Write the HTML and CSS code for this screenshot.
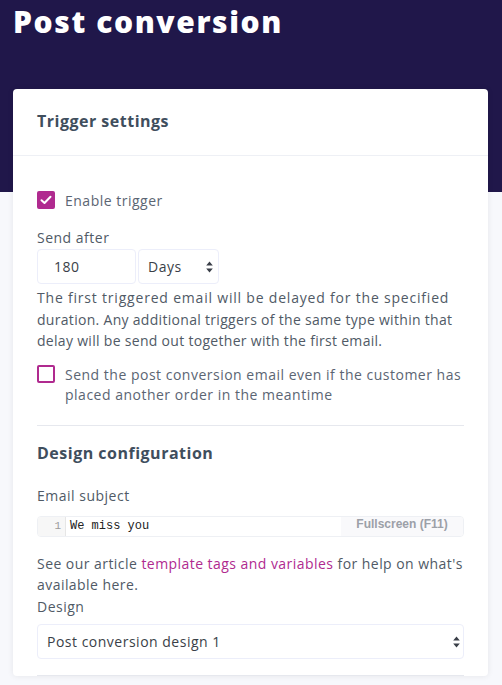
FILE: index.html
```html
<!DOCTYPE html>
<html>
<head>
<meta charset="utf-8">
<link rel="stylesheet" href="styles.css">
</head>
<body>
<div class="hero">
  <h1 class="page-title">Post conversion</h1>
</div>
<div class="main">
  <div class="card">
    <div class="card-header">Trigger settings</div>
    <div class="card-body">
      <label class="check-row">
        <span class="box checked"><svg width="12" height="10" viewBox="0 0 12 10"><path d="M1.5 5.2 L4.5 8 L10.5 1.8" fill="none" stroke="#fff" stroke-width="2" stroke-linecap="round" stroke-linejoin="round"/></svg></span>
        <span class="check-text">Enable trigger</span>
      </label>
      <div class="label send-label">Send after</div>
      <div class="send-row">
        <div class="input num">180</div>
        <div class="input sel days">Days<span class="arrows"><svg width="7" height="12" viewBox="0 0 7 12"><path d="M3.5 0.5 L6.8 4.6 H0.2 Z M3.5 11.5 L6.8 7.4 H0.2 Z" fill="#3a3f48"/></svg></span></div>
      </div>
      <p class="help"><span class="ln wide">The first triggered email will be delayed for the specified</span><br><span class="ln">duration. Any additional triggers of the same type within that</span><br><span class="ln">delay will be send out together with the first email.</span></p>
      <label class="check-row two">
        <span class="box"></span>
        <span class="check-text">Send the post conversion email even if the customer has placed another order in the meantime</span>
      </label>
      <hr class="divider">
      <h2 class="section-title">Design configuration</h2>
      <div class="label subj-label">Email subject</div>
      <div class="editor">
        <div class="gutter">1</div>
        <div class="code">We miss you</div>
        <div class="fullscreen">Fullscreen (F11)</div>
      </div>
      <p class="help article"><span class="ln">See our article <a class="link">template tags and variables</a> for help on what's</span><br><span class="ln">available here.</span></p>
      <div class="label design-label">Design</div>
      <div class="input sel design">Post conversion design 1<span class="arrows"><svg width="7" height="12" viewBox="0 0 7 12"><path d="M3.5 0.5 L6.8 4.6 H0.2 Z M3.5 11.5 L6.8 7.4 H0.2 Z" fill="#3a3f48"/></svg></span></div>
      <hr class="divider last">
    </div>
  </div>
</div>
</body>
</html>
```
FILE: styles.css
```css
* { box-sizing: border-box; }
html, body { margin: 0; padding: 0; }
body {
  background: #f7f8fc;
  font-family: "Open Sans", "DejaVu Sans", sans-serif;
  color: #505a66;
  letter-spacing: 0.5px;
  overflow: hidden;
  height: 685px;
}
.hero {
  background: #20174a;
  height: 192px;
  padding: 4px 13px 0;
}
.page-title {
  margin: 0;
  color: #fff;
  font-size: 30px;
  font-weight: 800;
  letter-spacing: 1.6px;
  line-height: 36px;
}
.main {
  margin-top: -103px;
  padding: 0 14px 0 13px;
}
.card {
  background: #fff;
  border-radius: 4px;
  box-shadow: 0 0 6px rgba(0,0,0,0.08);
}
.card-header {
  height: 67px;
  padding: 21px 24px 0;
  font-size: 16px;
  font-weight: 700;
  color: #3f4e5d;
  border-bottom: 1px solid #eef0f5;
}
.card-body {
  padding: 35px 24px 0;
}
.check-row {
  display: flex;
  align-items: flex-start;
  gap: 10px;
  font-size: 14px;
  line-height: 20px;
}
.box {
  flex: none;
  width: 18px;
  height: 18px;
  border: 2px solid #b02a8f;
  border-radius: 2px;
  display: flex;
  align-items: center;
  justify-content: center;
}
.box.checked { background: #b02a8f; }
.check-text { color: #5b6573; }
.label {
  font-size: 14px;
  line-height: 20px;
  color: #505a66;
}
.send-label { margin-top: 17px; }
.send-row {
  display: flex;
  gap: 2px;
  margin-top: 1px;
}
.input {
  height: 35px;
  border: 1px solid #eceefa;
  border-radius: 4px;
  font-size: 14px;
  color: #3a3f48;
  display: flex;
  align-items: center;
  position: relative;
}
.num { width: 99px; padding-left: 16px; }
.days { width: 81px; padding-left: 9px; }
.arrows {
  position: absolute;
  right: 5px;
  top: 11px;
  display: flex;
}
.help {
  margin: 3px 0 0;
  font-size: 14px;
  line-height: 21.5px;
  color: #505a66;
  letter-spacing: 0.3px;
}
.ln { white-space: nowrap; }
.ln.wide { letter-spacing: 0.8px; }
.check-row.two { margin-top: 13px; }
.divider {
  border: 0;
  border-top: 1px solid #e6e8ee;
  margin: 20px 0 0;
}
.section-title {
  margin: 15px 0 0;
  font-size: 16px;
  font-weight: 700;
  color: #3f4e5d;
  line-height: 24px;
}
.subj-label { margin-top: 21px; }
.editor {
  margin-top: 10px;
  height: 21px;
  border: 1px solid #eef0f4;
  border-radius: 4px;
  display: flex;
  align-items: stretch;
  position: relative;
  overflow: hidden;
  letter-spacing: 0;
}
.gutter {
  width: 28px;
  background: #f7f7f7;
  border-right: 1px solid #e6e6e6;
  font-family: "Liberation Mono", monospace;
  font-size: 11px;
  color: #9a9a9a;
  text-align: right;
  padding-right: 4px;
  line-height: 19px;
}
.code {
  font-family: "Liberation Mono", monospace;
  font-size: 12px;
  color: #222;
  padding-left: 4px;
  line-height: 19px;
}
.fullscreen {
  position: absolute;
  right: 0;
  top: 0;
  bottom: 0;
  width: 122px;
  background: #f9f9fb;
  font-family: "Liberation Sans", Arial, sans-serif;
  font-weight: 700;
  font-size: 12px;
  color: #9ca0a8;
  text-align: center;
  line-height: 14px;
}
.article { margin-top: 16px; letter-spacing: 0.45px; }
.link { color: #b02a8f; text-decoration: none; }
.design-label { margin-top: 0; line-height: 21px; }
.design {
  margin-top: 7px;
  width: 100%;
  padding-left: 9px;
}
.design .arrows { right: 3px; top: 11px; }
.divider.last { margin-top: 16px; }
```
